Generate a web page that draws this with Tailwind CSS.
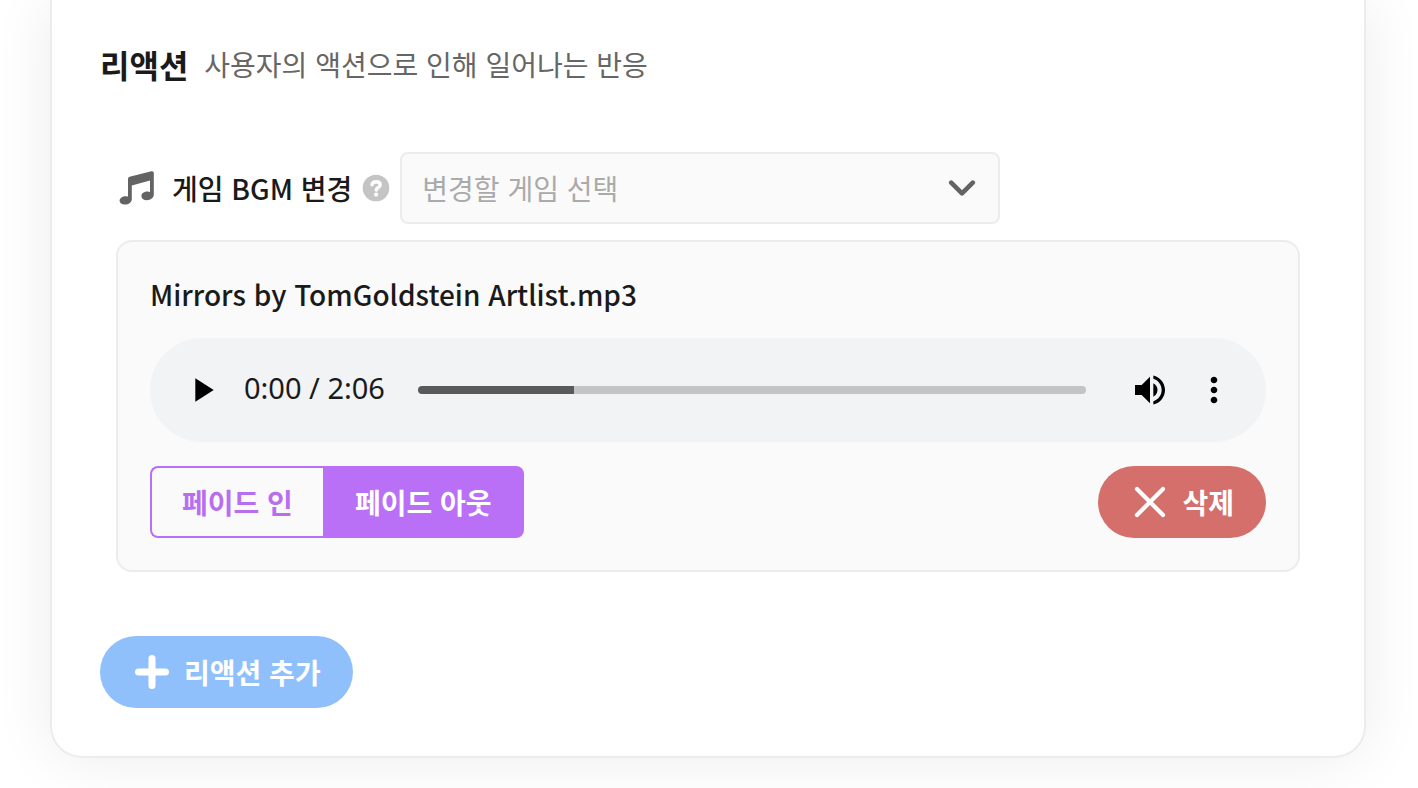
<!DOCTYPE html>
<html lang="ko">
  <head>
    <meta charset="UTF-8" />
    <meta name="viewport" content="width=device-width, initial-scale=1.0" />
    <title>리액션</title>
    <script src="https://cdn.jsdelivr.net/npm/@tailwindcss/browser@4"></script>
  </head>
  <body class="min-h-screen bg-white text-[#1a1a1a] text-[28px] font-['Noto_Sans_CJK_KR',sans-serif]">
    <main
      class="ml-[50px] mr-[52px] px-12 pt-11 pb-12 bg-white border-2 border-t-0 border-[#ececec] rounded-b-[32px] shadow-[0_0_60px_rgba(0,0,0,0.08)]"
    >
      <!-- Header -->
      <header class="flex items-center gap-4 leading-10 mb-17">
        <h1 class="text-[32px] font-bold">리액션</h1>
        <p class="text-[#666]">사용자의 액션으로 인해 일어나는 반응</p>
      </header>

      <section class="px-4 mb-16">
        <!-- Game select -->
        <div class="flex items-center mb-4">
          <svg class="w-10 h-10 mr-4" viewBox="0 0 40 40" fill="#636363">
            <path
              d="M12 11 Q12 9.3 13.6 8.8 L35.4 3.2 Q37.8 2.8 37.8 5 V26.5 C37.8 29.8 34.6 32.2 30.8 32.2 C27.4 32.2 25.4 30.4 25.4 28 C25.4 25.2 28.4 23.6 31.6 23.6 Q33.2 23.6 34 24 V12.6 L15.8 17.4 V31 C15.8 34.5 12.6 36.6 8.9 36.6 C5.6 36.6 3.6 35 3.6 32.7 C3.6 30 6.6 28.2 9.6 28.2 Q11.2 28.2 12 28.6 Z"
            />
          </svg>
          <label for="game" class="font-medium mr-2.5">게임 BGM 변경</label>
          <button type="button" aria-label="도움말" class="mr-2.5">
            <svg class="w-7 h-7" viewBox="0 0 28 28" fill="none">
              <circle cx="14" cy="14" r="13.3" fill="#c4c4c4" />
              <path
                d="M10 10.8 C10.4 8.6 12 7.7 14.2 7.7 C16.6 7.7 18.2 9 18.2 10.9 C18.2 13.4 14.4 13.5 14.2 16"
                stroke="#fff"
                stroke-width="3.4"
                stroke-linecap="round"
              />
              <circle cx="14.1" cy="20.6" r="2.1" fill="#fff" />
            </svg>
          </button>
          <div class="relative w-[600px]">
            <select
              id="game"
              class="appearance-none w-full h-18 pl-5 pr-16 bg-[#fafafa] text-[#aaa] border-2 border-[#ececec] rounded-lg"
            >
              <option>변경할 게임 선택</option>
            </select>
            <svg
              class="absolute right-6 top-1/2 -translate-y-1/2 w-7 h-7 pointer-events-none"
              viewBox="0 0 28 28"
              fill="none"
              stroke="#636363"
              stroke-width="4.6"
              stroke-linecap="round"
              stroke-linejoin="round"
            >
              <path d="M3.2 8.6 L14 19.4 L24.8 8.6" />
            </svg>
          </div>
        </div>

        <!-- Music panel -->
        <div class="p-8 bg-[#fafafa] border-2 border-[#ececec] rounded-2xl">
          <h2 class="font-medium leading-10 mb-6">Mirrors by TomGoldstein Artlist.mp3</h2>

          <!-- Player -->
          <div class="flex items-center h-[104px] px-8 mb-6 bg-[#f1f3f4] rounded-full">
            <button type="button" aria-label="재생">
              <svg class="w-10 h-10" viewBox="0 0 24 24">
                <path d="M8 5v14l11-7z" />
              </svg>
            </button>
            <span class="ml-[22px] mr-8 pb-1 w-[142px] whitespace-nowrap text-[29px] font-['Noto_Sans',sans-serif]">0:00 / 2:06</span>
            <input
              type="range"
              aria-label="재생 위치"
              value="0"
              class="appearance-none flex-1 min-w-0 h-2 mr-11 rounded-full bg-linear-to-r from-[#5a5a5a] from-[23.4%] to-[#c3c4c5] to-[23.4%] [&::-webkit-slider-thumb]:appearance-none [&::-webkit-slider-thumb]:w-0"
            />
            <button type="button" aria-label="음소거" class="mr-6">
              <svg class="w-10 h-10" viewBox="0 0 24 24">
                <path
                  d="M3 9v6h4l5 5V4L7 9H3zm13.5 3c0-1.77-1.02-3.29-2.5-4.03v8.05c1.48-.73 2.5-2.25 2.5-4.02zM14 3.23v2.06c2.89.86 5 3.54 5 6.71s-2.11 5.85-5 6.71v2.06c4.01-.91 7-4.49 7-8.77s-2.99-7.86-7-8.77z"
                />
              </svg>
            </button>
            <button type="button" aria-label="더보기">
              <svg class="w-10 h-10" viewBox="0 0 24 24">
                <path
                  d="M12 8c1.1 0 2-.9 2-2s-.9-2-2-2-2 .9-2 2 .9 2 2 2zm0 2c-1.1 0-2 .9-2 2s.9 2 2 2 2-.9 2-2-.9-2-2-2zm0 6c-1.1 0-2 .9-2 2s.9 2 2 2 2-.9 2-2-.9-2-2-2z"
                />
              </svg>
            </button>
          </div>

          <!-- Actions -->
          <div class="flex justify-between">
            <div class="flex font-bold">
              <button
                type="button"
                class="h-18 px-[30px] text-[#b76ff0] border-2 border-r-0 border-[#ba6ff7] rounded-l-lg"
              >
                페이드 인
              </button>
              <button type="button" class="h-18 px-8 bg-[#ba6ff7] text-white rounded-r-lg">
                페이드 아웃
              </button>
            </div>
            <button
              type="button"
              class="flex items-center gap-4 h-18 px-8 bg-[#d56f6b] text-white font-bold rounded-full"
            >
              <svg
                class="w-9 h-9"
                viewBox="0 0 36 36"
                stroke="#fff"
                stroke-width="4.2"
                stroke-linecap="round"
              >
                <path d="M7 5 L33 31 M33 5 L7 31" />
              </svg>
              삭제
            </button>
          </div>
        </div>
      </section>

      <!-- Add reaction -->
      <button
        type="button"
        class="flex items-center gap-4 h-18 px-8 bg-[#8fc0fc] text-white font-bold rounded-full"
      >
        <svg
          class="w-9 h-9 overflow-visible"
          viewBox="0 0 36 36"
          stroke="#fff"
          stroke-width="7"
          stroke-linecap="round"
        >
          <path d="M20 4.5 V31.5 M6.5 18 H33.5" />
        </svg>
        리액션 추가
      </button>
    </main>
  </body>
</html>
